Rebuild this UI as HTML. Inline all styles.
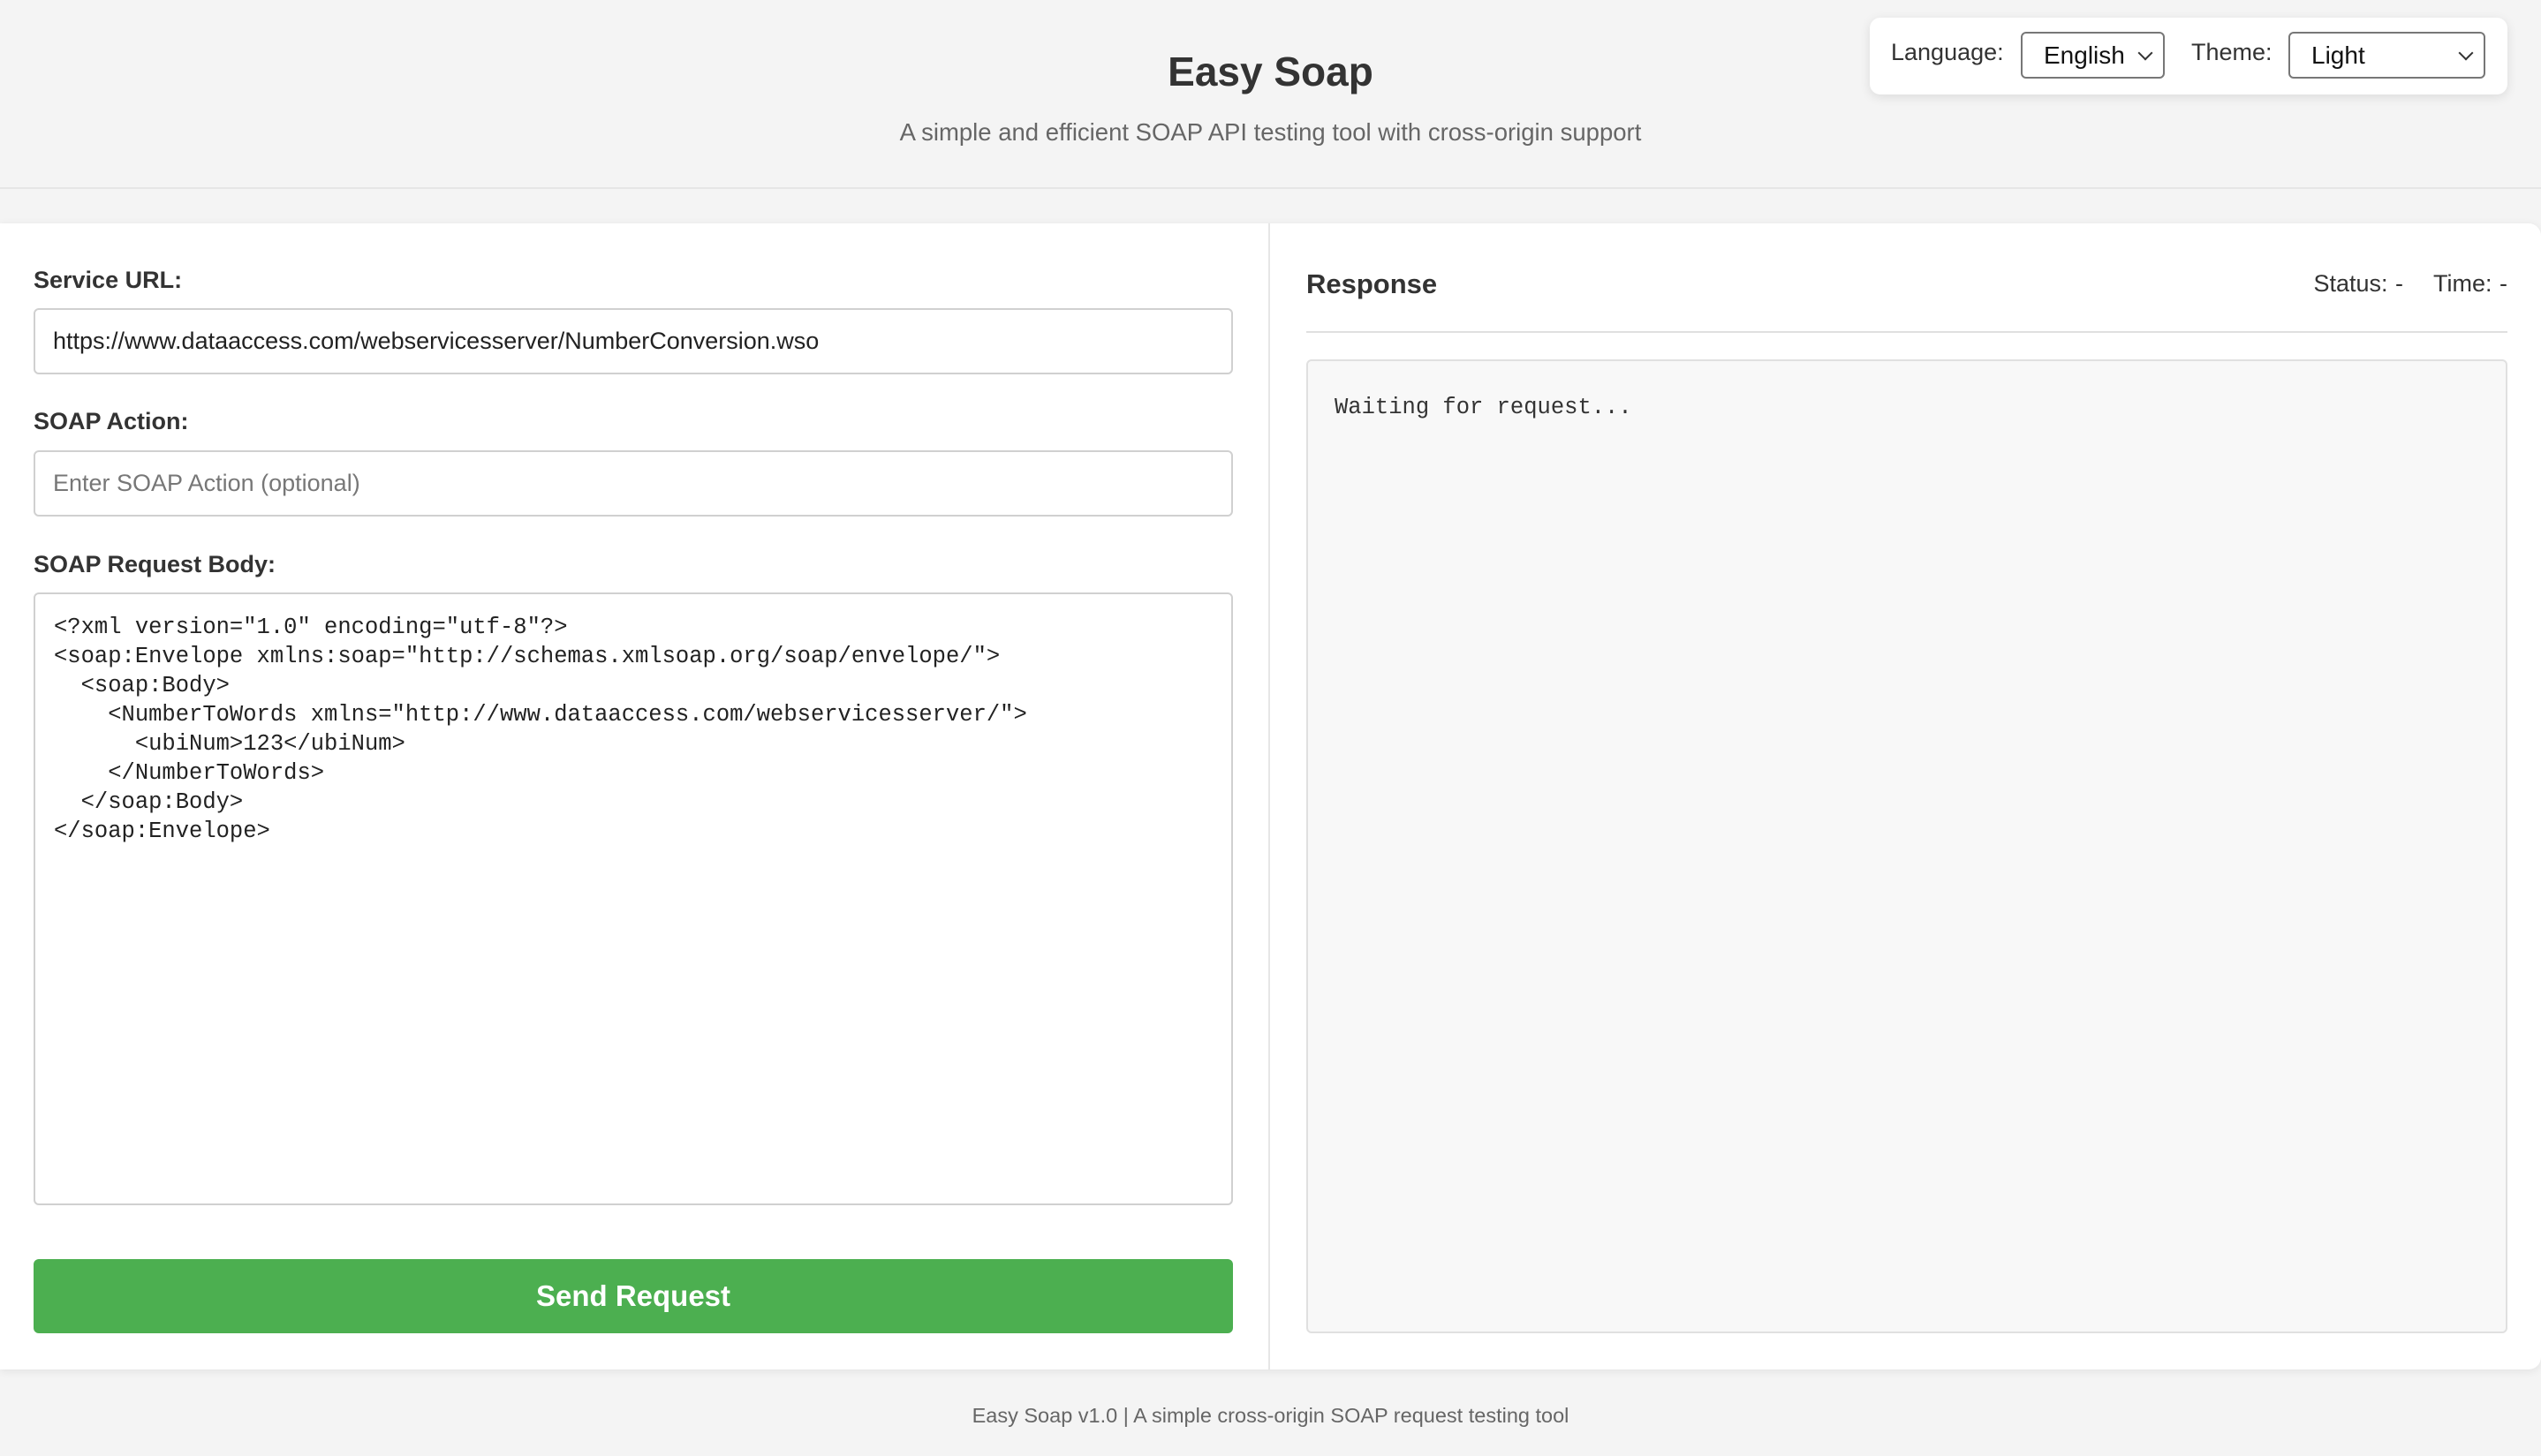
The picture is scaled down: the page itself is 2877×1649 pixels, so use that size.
<!DOCTYPE html>
<html><head><meta charset="utf-8"><style>
*{box-sizing:border-box;margin:0;padding:0}
html,body{width:2877px;height:1649px;overflow:hidden;background:#f4f4f4;font-family:"Liberation Sans",sans-serif;color:#333}
h1{position:absolute;left:0;width:2877px;top:54px;text-align:center;font-size:46px;font-weight:bold;color:#333}
.sub{position:absolute;left:0;width:2877px;top:134px;text-align:center;font-size:27.5px;color:#666}
.hline{position:absolute;left:0;top:212px;width:2877px;height:2px;background:#e6e6e6}
.ctrl{position:absolute;left:2117px;top:20px;width:722px;height:87px;background:#fff;border-radius:12px;box-shadow:0 3px 12px rgba(0,0,0,.1)}
.ctrl span{position:absolute;top:24px;font-size:27px;color:#333}
.sel{position:absolute;top:16px;height:53px;border:2px solid #777;border-radius:6px;background:#fff;font-size:28px;padding:9px 0 0 24px;color:#111}
.sel:after{content:"";position:absolute;right:14px;top:16px;width:10px;height:10px;border-right:2px solid #333;border-bottom:2px solid #333;transform:rotate(45deg)}
.card{position:absolute;left:0;top:253px;width:2877px;height:1298px;background:#fff;border-radius:0 14px 14px 0;box-shadow:0 2px 10px rgba(0,0,0,.08)}
.div{position:absolute;left:1436px;top:253px;width:2px;height:1298px;background:#e6e6e6}
.lab{position:absolute;left:38px;font-size:27px;font-weight:bold;color:#333}
.inp{position:absolute;left:38px;width:1358px;border:2px solid #d0d0d0;border-radius:6px;background:#fff;font-size:27px;padding:0 0 0 20px;line-height:71px}
pre{font-family:"Liberation Mono",monospace}
.ta{position:absolute;left:38px;top:671px;width:1358px;height:694px;border:2px solid #d0d0d0;border-radius:6px;padding:21px 0 0 21px;font-size:25.5px;line-height:33px;color:#222}
.btn{position:absolute;left:38px;top:1426px;width:1358px;height:84px;background:#4caf50;border-radius:6px;color:#fff;font-size:33px;font-weight:bold;text-align:center;line-height:84px}
.resp{position:absolute;left:1479px;top:304px;font-size:31px;font-weight:bold;color:#333}
.stat{position:absolute;right:38px;top:306px;font-size:27px;color:#333;word-spacing:1px}
.rline{position:absolute;left:1479px;top:375px;width:1360px;height:2px;background:#e0e0e0}
.rbox{position:absolute;left:1479px;top:407px;width:1360px;height:1103px;background:#f8f8f8;border:2px solid #e0e0e0;border-radius:6px;padding:38px 0 0 30px;font-size:25.5px;color:#333}
.foot{position:absolute;left:0;width:2877px;top:1590px;text-align:center;font-size:23.5px;color:#666}
</style></head><body>
<h1>Easy Soap</h1>
<div class="sub">A simple and efficient SOAP API testing tool with cross-origin support</div>
<div class="hline"></div>
<div class="ctrl">
<span style="left:24px">Language:</span>
<div class="sel" style="left:171px;width:163px">English</div>
<span style="left:364px">Theme:</span>
<div class="sel" style="left:474px;width:223px">Light</div>
</div>
<div class="card"></div>
<div class="div"></div>
<div class="lab" style="top:302px">Service URL:</div>
<div class="inp" style="top:349px;height:75px;color:#222">https://www.dataaccess.com/webservicesserver/NumberConversion.wso</div>
<div class="lab" style="top:462px">SOAP Action:</div>
<div class="inp" style="top:510px;height:75px;color:#777">Enter SOAP Action (optional)</div>
<div class="lab" style="top:624px">SOAP Request Body:</div>
<pre class="ta">&lt;?xml version="1.0" encoding="utf-8"?&gt;
&lt;soap:Envelope xmlns:soap="http://schemas.xmlsoap.org/soap/envelope/"&gt;
  &lt;soap:Body&gt;
    &lt;NumberToWords xmlns="http://www.dataaccess.com/webservicesserver/"&gt;
      &lt;ubiNum&gt;123&lt;/ubiNum&gt;
    &lt;/NumberToWords&gt;
  &lt;/soap:Body&gt;
&lt;/soap:Envelope&gt;</pre>
<div class="btn">Send Request</div>
<div class="resp">Response</div>
<div class="stat">Status: -&nbsp;&nbsp;&nbsp;&nbsp;Time: -</div>
<div class="rline"></div>
<pre class="rbox">Waiting for request...</pre>
<div class="foot">Easy Soap v1.0 | A simple cross-origin SOAP request testing tool</div>
</body></html>
